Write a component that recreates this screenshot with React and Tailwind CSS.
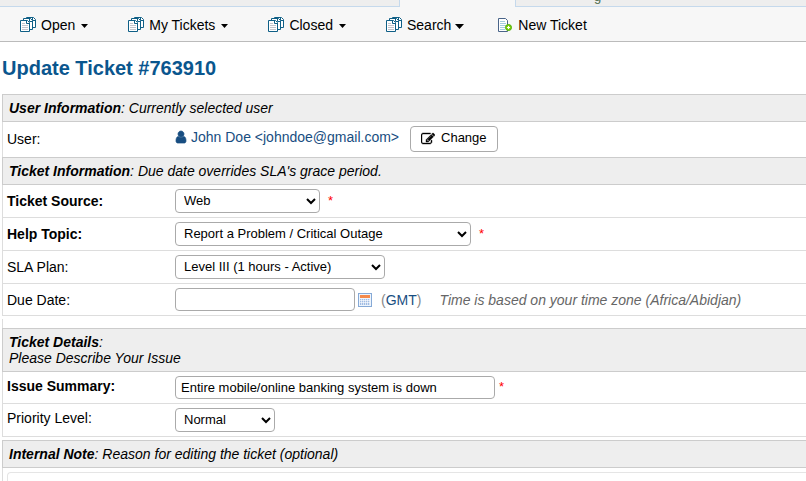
import React from "react";

function PagesIcon() {
  return (
    <svg width="16" height="16" viewBox="0 0 16 16" className="shrink-0" aria-hidden="true">
      <path d="M6.500 .5H13.500L15.500 2.500V10.500H6.500Z" fill="#fff" stroke="#0f5f86" />
      <path d="M12.500 1V3.500H15" fill="none" stroke="#0f5f86" />
      <path d="M3.500 1.500H10.500L12.500 3.500V12.500H3.500Z" fill="#fff" stroke="#0f5f86" />
      <path d="M9.500 2V4.500H12" fill="none" stroke="#0f5f86" />
      <path d="M.5 3.500H7.500L9.500 5.500V14.500H.5Z" fill="#fff" stroke="#0f5f86" />
      <path d="M6.500 4V6.500H9" fill="none" stroke="#0f5f86" />
      <path d="M2 6.500H5M2 8.500H8M2 10.500H8M2 12.500H8" stroke="#c4c4cc" />
    </svg>
  );
}

function NewTicketIcon() {
  return (
    <svg width="14" height="14" viewBox="0 0 14 14" className="shrink-0" aria-hidden="true">
      <path d="M.5 .5H7.500L9.500 2.500V13.500H.5Z" fill="#fff" stroke="#4a6489" />
      <path d="M2 3.500H7M2 5.500H8M2 7.500H8M2 9.500H7M2 11.500H7" stroke="#a3cde0" />
      <circle cx="10.500" cy="9.500" r="3" fill="#7fd010" stroke="#4fae0a" />
      <path d="M10.500 8V11M9 9.500H12" stroke="#fff" />
    </svg>
  );
}

function UserIcon() {
  return (
    <svg width="12" height="14" viewBox="128 0 1536 1792" className="shrink-0" fill="currentColor" aria-hidden="true">
      <path d="M1536 1399q0 109-62.500 187t-150.500 78h-854q-88 0-150.500-78t-62.500-187q0-85 8.500-160.500t31.500-152 58.500-131 94-89 134.500-34.500q131 128 313 128t313-128q76 0 134.500 34.500t94 89 58.500 131 31.500 152 8.500 160.500zm-256-887q0 159-112.500 271.500t-271.500 112.500-271.500-112.500-112.500-271.500 112.500-271.500 271.500-112.500 271.500 112.500 112.500 271.500z" stroke="currentColor" strokeWidth="90" />
    </svg>
  );
}

function EditIcon() {
  return (
    <svg width="14" height="14" viewBox="0 0 1792 1792" className="shrink-0" fill="currentColor" aria-hidden="true">
      <path d="M888 1184l116-116-152-152-116 116v56h96v96h56zm440-720q-16-16-33 1l-350 350q-17 17-1 33t33-1l350-350q17-17 1-33zm80 594v190q0 119-84.500 203.500t-203.500 84.500h-832q-119 0-203.500-84.500t-84.500-203.500v-832q0-119 84.500-203.500t203.500-84.500h832q63 0 117 25 15 7 18 23 3 17-9 29l-49 49q-14 14-32 8-23-6-45-6h-832q-66 0-113 47t-47 113v832q0 66 47 113t113 47h832q66 0 113-47t47-113v-126q0-13 9-22l64-64q15-15 35-7t20 29zm-96-738l288 288-672 672h-288v-288zm444 132l-92 92-288-288 92-92q28-28 68-28t68 28l152 152q28 28 28 68t-28 68z" stroke="currentColor" strokeWidth="50" />
    </svg>
  );
}

function CalendarIcon() {
  return (
    <svg width="14" height="14" viewBox="0 0 14 14" aria-hidden="true">
      <rect x=".5" y=".5" width="13" height="13" fill="#eef5fd" stroke="#86a9d6" />
      <rect x="2" y="2" width="10" height="3" fill="#f58a4b" />
      <rect x="2" y="6" width="10" height="6" fill="#a0bce3" />
      <path d="M2 7.500H12M2 9.500H12M3.500 6V12M5.500 6V12M7.500 6V12M9.500 6V12M11.500 6V12" stroke="#fff" strokeWidth=".6" />
    </svg>
  );
}

function Caret({ large }) {
  return large ? (
    <svg width="9" height="5" viewBox="0 0 9 5" className="mt-[3px] ml-1" aria-hidden="true">
      <path d="M0 0H9L4.500 5Z" />
    </svg>
  ) : (
    <svg width="7" height="4" viewBox="0 0 7 4" className="mt-px ml-1.5" aria-hidden="true">
      <path d="M0 0H7L3.500 4Z" />
    </svg>
  );
}

function NavMenu({ label, large }) {
  return (
    <button type="button" className="flex items-center whitespace-nowrap">
      <PagesIcon />
      <span className="ml-[5px]">{label}</span>
      <Caret large={large} />
    </button>
  );
}

function SectionHeader({ title, children, stacked }) {
  return (
    <h3 className="border border-r-0 border-[#ccc] bg-[#eee] px-1.5 py-[5px] leading-4 italic">
      <strong>{title}</strong>:{stacked ? <br /> : " "}
      {children}
    </h3>
  );
}

function Row({ label, htmlFor, required, raised, compact, children }) {
  return (
    <div className={`flex items-center border-b border-l border-[#ddd] ${compact ? "h-8" : "h-[33px]"}`}>
      <label
        htmlFor={htmlFor}
        className={`w-[172px] shrink-0 pl-1 ${required ? "font-bold" : ""} ${raised ? "pb-1" : ""}`}
      >
        {label}
      </label>
      <div className="flex min-w-0 flex-1 items-center whitespace-nowrap">{children}</div>
    </div>
  );
}

function Required() {
  return <span className="ml-2 text-[13px] text-[#f00]">*</span>;
}

const selectClass = "h-6 rounded border border-[#aaa] bg-white px-1 pb-0.5 text-[13px] text-black";
const inputClass = "h-[23px] rounded border border-[#aaa] bg-white px-[5px] text-[13px] text-black";

export default function App() {
  return (
    <div className="overflow-hidden bg-white font-['Liberation_Sans',Arial,sans-serif] text-sm text-black">
      <header>
        <div className="flex h-[7px] bg-[#f7f7f7]">
          <div className="w-[400px] border-r border-b border-[#c5d9ec] bg-[#eee]" />
          <div className="w-[115px]" />
          <div className="flex flex-1 items-end border-b border-l border-[#c5d9ec] bg-[#eee] pl-[78px]">
            <span className="pb-px text-[13px] leading-4 text-[#4c6b4c]">g</span>
          </div>
        </div>
        <nav className="flex h-[35px] items-center gap-10 border-b border-[#bbb] bg-[#f7f7f7] pt-0.5 pl-5">
          <NavMenu label="Open" />
          <NavMenu label="My Tickets" />
          <NavMenu label="Closed" />
          <NavMenu label="Search" large />
          <a href="#new" className="-ml-1.5 flex items-center whitespace-nowrap">
            <NewTicketIcon />
            <span className="ml-1.5">New Ticket</span>
          </a>
        </nav>
      </header>

      <form className="pl-0.5">
        <h2 className="py-[14px] text-xl leading-6 font-bold text-[#0a568e]">Update Ticket #763910</h2>

        <SectionHeader title="User Information">Currently selected user</SectionHeader>
        <div className="flex h-[35px] items-center border-l border-[#ddd] pb-0.5">
          <div className="w-[172px] shrink-0 pl-1">User:</div>
          <a href="#user" className="flex items-center gap-1 pb-1 whitespace-nowrap text-[#184e81]">
            <UserIcon />
            John Doe &lt;johndoe@gmail.com&gt;
          </a>
          <button type="button" className="ml-[11px] flex h-[26px] items-center gap-1.5 rounded-sm border border-[#aaa] px-2.5 text-[13px]">
            <EditIcon />
            Change
          </button>
        </div>

        <SectionHeader title="Ticket Information">Due date overrides SLA's grace period.</SectionHeader>
        <Row label="Ticket Source:" htmlFor="source" required>
          <select id="source" className={`${selectClass} w-[145px]`}>
            <option>Web</option>
          </select>
          <Required />
        </Row>
        <Row label="Help Topic:" htmlFor="topic" required>
          <select id="topic" className={`${selectClass} w-[296px]`}>
            <option>Report a Problem / Critical Outage</option>
          </select>
          <Required />
        </Row>
        <Row label="SLA Plan:" htmlFor="sla">
          <select id="sla" className={`${selectClass} w-[210px]`}>
            <option>Level III (1 hours - Active)</option>
          </select>
        </Row>
        <Row label="Due Date:" htmlFor="due" compact>
          <input id="due" type="text" className={`${inputClass} w-[180px]`} />
          <button type="button" aria-label="Pick a date" className="ml-[3px]">
            <CalendarIcon />
          </button>
          <span className="ml-[9px] text-[#888]">
            (<a href="#timezone" className="text-[#184e81]">GMT</a>)
          </span>
          <em className="ml-[18px] text-[#666]">Time is based on your time zone (Africa/Abidjan)</em>
        </Row>

        <div className="mt-[3px] h-[9px] border-l border-[#ddd]" />
        <SectionHeader title="Ticket Details" stacked>
          Please Describe Your Issue
        </SectionHeader>
        <Row label="Issue Summary:" htmlFor="summary" required raised compact>
          <input id="summary" type="text" defaultValue="Entire mobile/online banking system is down" className={`${inputClass} w-[320px]`} />
          <span className="ml-1 text-[13px] text-[#f00]">*</span>
        </Row>
        <Row label="Priority Level:" htmlFor="priority" raised>
          <select id="priority" className={`${selectClass} w-[100px]`}>
            <option>Normal</option>
          </select>
        </Row>

        <div className="mt-[3px]">
          <SectionHeader title="Internal Note">Reason for editing the ticket (optional)</SectionHeader>
        </div>
        <div className="border-l border-[#ddd] pt-1 pl-1">
          <textarea aria-label="Internal note" className="block h-[9px] w-full resize-none rounded-tl-sm border border-r-0 border-b-0 border-[#e5e5e5]" />
        </div>
      </form>
    </div>
  );
}
